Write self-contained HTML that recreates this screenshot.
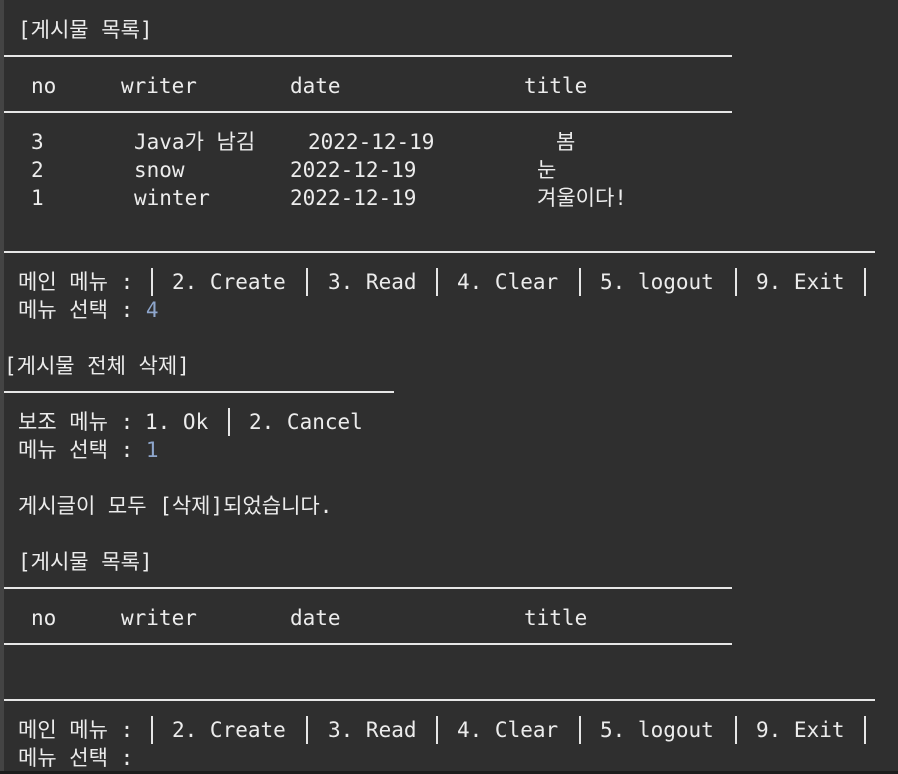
<!DOCTYPE html>
<html><head><meta charset="utf-8"><style>
html,body{margin:0;padding:0}
body{width:898px;height:774px;background:#2f2f2f;position:relative;overflow:hidden;font-family:"DejaVu Sans Mono","Noto Sans CJK KR",monospace;font-size:21px;color:#ececec}
.t{position:absolute;white-space:pre;line-height:28px;height:28px;margin-top:2px}
.h{position:absolute;left:4px;height:2px;background:#e6e6e6}
.b{color:#8ea6cc}
.v{position:absolute;width:2px;height:28px;background:#e6e6e6;margin-top:2px}
</style></head><body>
<div style="position:absolute;left:0;top:0;width:4px;height:774px;background:#444"></div>
<div style="position:absolute;left:0;top:771px;width:898px;height:3px;background:#1c1c1c"></div>

<div class="t" style="left:18px;top:14px">[게시물 목록]</div>
<div class="h" style="top:55px;width:728px"></div>
<div class="t" style="left:31px;top:70px">no</div>
<div class="t" style="left:121px;top:70px">writer</div>
<div class="t" style="left:290px;top:70px">date</div>
<div class="t" style="left:524px;top:70px">title</div>
<div class="h" style="top:111px;width:728px"></div>

<div class="t" style="left:31px;top:126px">3</div>
<div class="t" style="left:134px;top:126px">Java가 남김</div>
<div class="t" style="left:308px;top:126px">2022-12-19</div>
<div class="t" style="left:556px;top:126px">봄</div>
<div class="t" style="left:31px;top:154px">2</div>
<div class="t" style="left:134px;top:154px">snow</div>
<div class="t" style="left:290px;top:154px">2022-12-19</div>
<div class="t" style="left:537px;top:154px">눈</div>
<div class="t" style="left:31px;top:182px">1</div>
<div class="t" style="left:134px;top:182px">winter</div>
<div class="t" style="left:290px;top:182px">2022-12-19</div>
<div class="t" style="left:537px;top:182px">겨울이다!</div>

<div class="h" style="top:251px;width:871px"></div>
<div class="t" style="left:18px;top:266px">메인 메뉴 :</div>
<div class="v" style="left:151px;top:266px"></div>
<div class="t" style="left:172px;top:266px">2. Create</div>
<div class="v" style="left:306px;top:266px"></div>
<div class="t" style="left:328px;top:266px">3. Read</div>
<div class="v" style="left:436px;top:266px"></div>
<div class="t" style="left:457px;top:266px">4. Clear</div>
<div class="v" style="left:579px;top:266px"></div>
<div class="t" style="left:600px;top:266px">5. logout</div>
<div class="v" style="left:735px;top:266px"></div>
<div class="t" style="left:756px;top:266px">9. Exit</div>
<div class="v" style="left:864px;top:266px"></div>
<div class="t" style="left:18px;top:294px">메뉴 선택 : <span class="b">4</span></div>

<div class="t" style="left:4px;top:350px">[게시물 전체 삭제]</div>
<div class="h" style="top:391px;width:390px"></div>
<div class="t" style="left:18px;top:406px">보조 메뉴 :</div>
<div class="t" style="left:145px;top:406px">1. Ok</div>
<div class="v" style="left:228px;top:406px"></div>
<div class="t" style="left:249px;top:406px">2. Cancel</div>
<div class="t" style="left:18px;top:434px">메뉴 선택 : <span class="b">1</span></div>

<div class="t" style="left:18px;top:490px">게시글이 모두 [삭제]되었습니다.</div>

<div class="t" style="left:18px;top:546px">[게시물 목록]</div>
<div class="h" style="top:587px;width:728px"></div>
<div class="t" style="left:31px;top:602px">no</div>
<div class="t" style="left:121px;top:602px">writer</div>
<div class="t" style="left:290px;top:602px">date</div>
<div class="t" style="left:524px;top:602px">title</div>
<div class="h" style="top:643px;width:728px"></div>

<div class="h" style="top:699px;width:871px"></div>
<div class="t" style="left:18px;top:714px">메인 메뉴 :</div>
<div class="v" style="left:151px;top:714px"></div>
<div class="t" style="left:172px;top:714px">2. Create</div>
<div class="v" style="left:306px;top:714px"></div>
<div class="t" style="left:328px;top:714px">3. Read</div>
<div class="v" style="left:436px;top:714px"></div>
<div class="t" style="left:457px;top:714px">4. Clear</div>
<div class="v" style="left:579px;top:714px"></div>
<div class="t" style="left:600px;top:714px">5. logout</div>
<div class="v" style="left:735px;top:714px"></div>
<div class="t" style="left:756px;top:714px">9. Exit</div>
<div class="v" style="left:864px;top:714px"></div>
<div class="t" style="left:18px;top:742px">메뉴 선택 :</div>
</body></html>
